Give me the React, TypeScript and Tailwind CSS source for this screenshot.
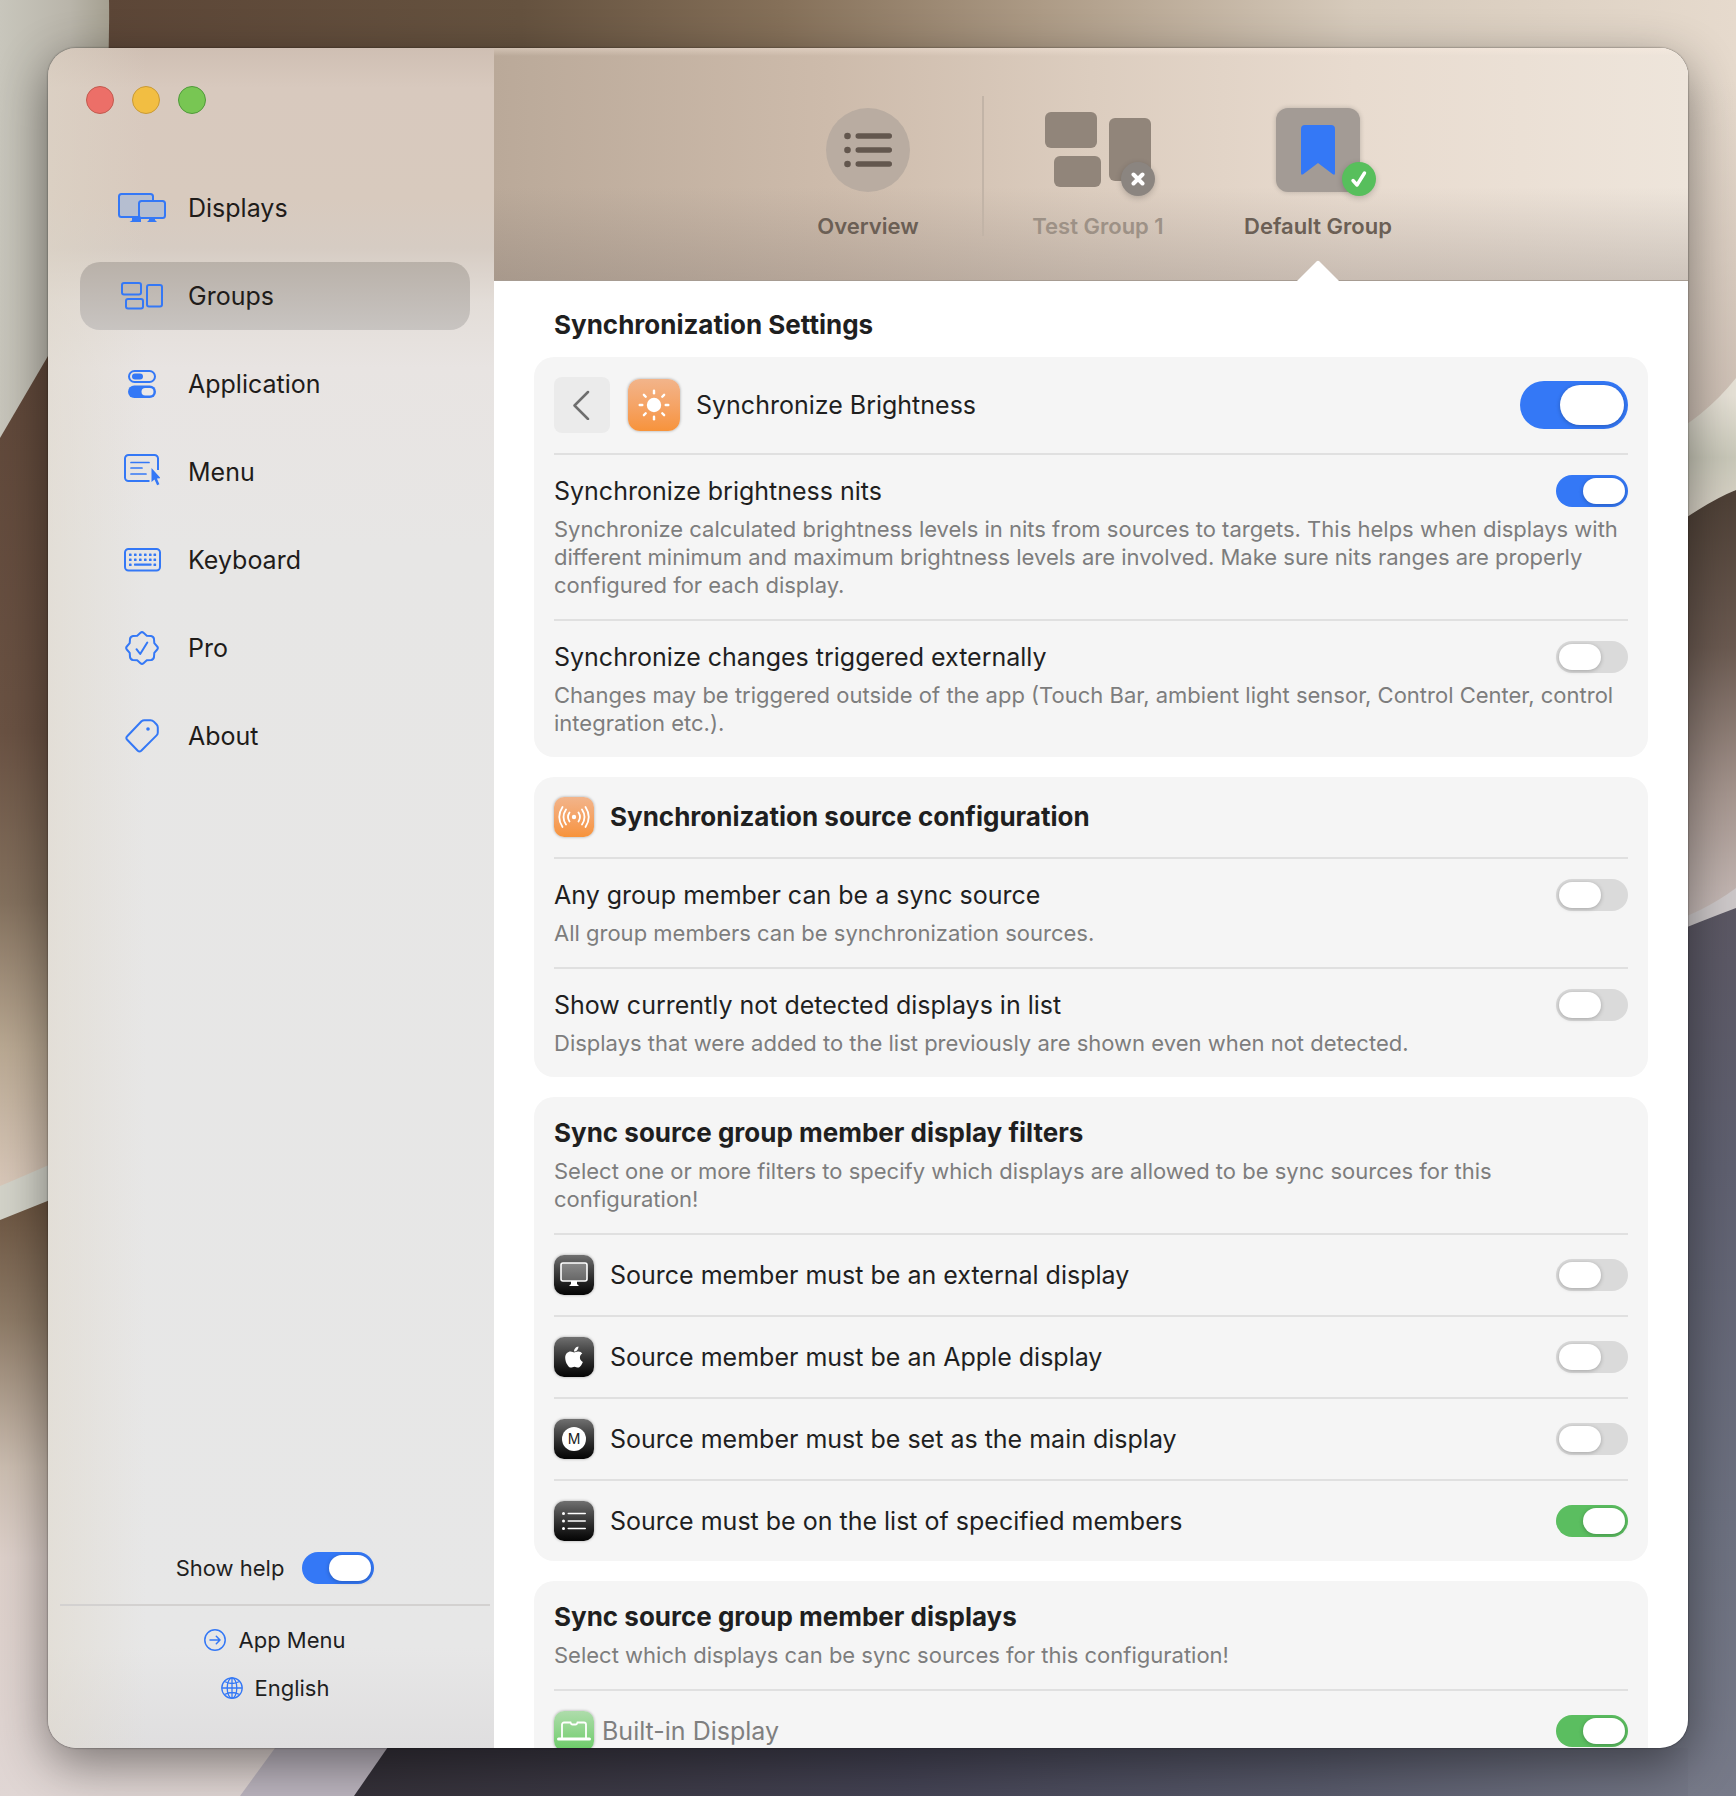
import type { ReactNode } from 'react';
import { clsx } from 'clsx';
import { FaApple } from 'react-icons/fa';

const BLUE = '#3478f6';

/* ---------- Icons ---------- */

function DisplaysIcon() {
  return (
    <svg width="48" height="30" viewBox="0 0 48 30" fill="none" aria-hidden="true">
      <path d="M14 24h9v5H11.500l2.500-1.500z" fill={BLUE} />
      <rect x="1" y="1" width="34" height="23" rx="2.500" fill="#b5bed0" stroke={BLUE} strokeWidth="2" />
      <rect x="21" y="8" width="26" height="17" rx="2.500" fill="#b5bed0" stroke={BLUE} strokeWidth="2" />
      <path d="M31 25h6v2l2 2H29l2-2z" fill={BLUE} />
    </svg>
  );
}

function GroupsIcon() {
  return (
    <svg width="42" height="28" viewBox="0 0 42 28" fill="none" stroke={BLUE} strokeWidth="2" aria-hidden="true">
      <rect x="1" y="1" width="19" height="11.500" rx="2" />
      <rect x="5" y="17" width="17" height="9.500" rx="2" />
      <rect x="26" y="3" width="15" height="21.500" rx="2" />
    </svg>
  );
}

function ApplicationIcon() {
  return (
    <svg width="28" height="28" viewBox="0 0 28 28" fill="none" aria-hidden="true">
      <rect x="1" y="1" width="26" height="11" rx="5.500" stroke={BLUE} strokeWidth="2" />
      <rect x="4" y="3.500" width="11" height="6" rx="3" fill={BLUE} />
      <rect x="0" y="15.500" width="28" height="12.500" rx="6.250" fill={BLUE} />
      <rect x="13.500" y="18" width="12" height="7.500" rx="3.750" fill="#ece9e8" />
    </svg>
  );
}

function MenuIcon() {
  return (
    <svg width="36" height="36" viewBox="0 0 36 36" fill="none" stroke={BLUE} strokeWidth="2" aria-hidden="true">
      <path d="M25.500 27H4.500A3.500 3.500 0 0 1 1 23.500v-19A3.500 3.500 0 0 1 4.500 1h26A3.500 3.500 0 0 1 34 4.500V16" />
      <path d="M7 8.500h18M7 14h11M7 20h15" strokeWidth="1.700" strokeLinecap="round" />
      <path d="M27.500 14v14l3-2.600 2.600 5.800 2.300-1-2.500-5.700 3.600-.4z" fill={BLUE} stroke="none" />
    </svg>
  );
}

function KeyboardIcon() {
  const columns = [5, 10, 15, 20, 25, 29.5];
  return (
    <svg width="37" height="24" viewBox="0 0 37 24" fill="none" aria-hidden="true">
      <rect x="1" y="1" width="35" height="21.500" rx="3.500" stroke={BLUE} strokeWidth="2" />
      {columns.map((x) => (
        <g key={x} fill={BLUE}>
          <rect x={x} y="5.500" width="2.600" height="2.600" rx=".6" />
          <rect x={x} y="10.500" width="2.600" height="2.600" rx=".6" />
        </g>
      ))}
      <rect x="5" y="15.500" width="2.600" height="2.600" rx=".6" fill={BLUE} />
      <rect x="29.500" y="15.500" width="2.600" height="2.600" rx=".6" fill={BLUE} />
      <rect x="10" y="15.500" width="17.600" height="2.200" rx=".6" fill={BLUE} />
    </svg>
  );
}

function ProIcon() {
  return (
    <svg width="34" height="34" viewBox="-17 -17 34 34" fill="none" stroke={BLUE} strokeWidth="2" strokeLinecap="round" strokeLinejoin="round" aria-hidden="true">
      <path d="M-1.500-15.200Q0-16.500 1.500-15.200L4.800-12.300L9-12Q11.600-11.600 12-9L12.300-4.800L15.200-1.500Q16.500 0 15.200 1.500L12.300 4.800L12 9Q11.600 11.600 9 12L4.800 12.300L1.500 15.200Q0 16.500-1.500 15.200L-4.800 12.300L-9 12Q-11.600 11.600-12 9L-12.300 4.800L-15.200 1.500Q-16.500 0-15.200-1.500L-12.300-4.800L-12-9Q-11.600-11.600-9-12L-4.800-12.300Z" />
      <path d="M-5.500 1.200L-1.800 6L5.300-5.500" />
    </svg>
  );
}

function AboutIcon() {
  return (
    <svg width="34" height="34" viewBox="0 0 34 34" fill="none" stroke={BLUE} strokeWidth="2" strokeLinejoin="round" aria-hidden="true">
      <path d="M16.500 2.200Q17.800 1.200 19.300 1.200H25.500Q27.500 1.200 28.800 2.600L31.600 5.500Q32.800 6.800 32.800 8.600V13.500Q32.800 15.200 31.600 16.400L16.200 31.800Q14.500 33.300 12.800 31.800L2.200 20.800Q.5 18.900 2.200 17.200Z" />
      <circle cx="23" cy="10" r="1.800" fill={BLUE} stroke="none" />
    </svg>
  );
}

function ArrowCircleIcon() {
  return (
    <svg width="22" height="22" viewBox="0 0 22 22" fill="none" stroke={BLUE} strokeWidth="1.500" strokeLinecap="round" strokeLinejoin="round" aria-hidden="true">
      <circle cx="11" cy="11" r="10.200" />
      <path d="M6 11h10M12.300 7.300L16 11l-3.700 3.700" />
    </svg>
  );
}

function GlobeIcon() {
  return (
    <svg width="22" height="22" viewBox="0 0 22 22" fill="none" stroke={BLUE} strokeWidth="1.300" aria-hidden="true">
      <circle cx="11" cy="11" r="10.200" />
      <ellipse cx="11" cy="11" rx="4.800" ry="10.200" />
      <path d="M11 .8v20.400M.8 11h20.400M3.500 4.500Q11 8.500 18.500 4.500M3.500 17.500Q11 13.500 18.500 17.500" />
    </svg>
  );
}

function SunIcon() {
  return (
    <svg width="32" height="32" viewBox="-16 -16 32 32" fill="#fff" aria-hidden="true">
      <circle r="7.200" />
      {[0, 45, 90, 135, 180, 225, 270, 315].map((angle) => (
        <rect key={angle} x="-1.200" y="-15.500" width="2.400" height="5" rx="1.200" transform={`rotate(${angle})`} />
      ))}
    </svg>
  );
}

function BroadcastIcon() {
  return (
    <svg width="32" height="24" viewBox="-16 -12 32 24" fill="none" stroke="#fff" strokeWidth="1.800" strokeLinecap="round" aria-hidden="true">
      <circle r="2.200" fill="#fff" stroke="none" />
      <path d="M4.500-4.500Q7.500 0 4.500 4.500M-4.500-4.500Q-7.500 0-4.500 4.500M8-7.500Q13 0 8 7.500M-8-7.500Q-13 0-8 7.500M11.500-10Q18 0 11.500 10M-11.500-10Q-18 0-11.500 10" />
    </svg>
  );
}

function MonitorIcon() {
  return (
    <svg width="28" height="26" viewBox="0 0 28 26" fill="none" aria-hidden="true">
      <rect x="1" y="1" width="26" height="18" rx="2" fill="#fff" fillOpacity=".3" stroke="#fff" strokeWidth="1.600" />
      <path d="M11 19h6v3l2 2H9l2-2z" fill="#fff" />
    </svg>
  );
}

function MainIcon() {
  return (
    <span className="flex size-6 items-center justify-center rounded-full bg-white text-sm leading-none text-[#222]">
      M
    </span>
  );
}

function OverviewIcon() {
  return (
    <svg width="48" height="36" viewBox="0 0 48 36" fill="#63574e" aria-hidden="true">
      {[4, 18, 32].map((y) => (
        <g key={y}>
          <circle cx="3.500" cy={y} r="3.300" />
          <rect x="11.500" y={y - 2.7} width="36.500" height="5.400" rx="2.700" />
        </g>
      ))}
    </svg>
  );
}

function ListIcon() {
  return (
    <svg width="24" height="18" viewBox="0 0 24 18" fill="#fff" aria-hidden="true">
      {[1.5, 9, 16.5].map((y) => (
        <g key={y}>
          <circle cx="1.500" cy={y} r="1.500" />
          <rect x="5.500" y={y - 0.8} width="18.500" height="1.600" rx=".8" />
        </g>
      ))}
    </svg>
  );
}

function LaptopIcon() {
  return (
    <svg width="34" height="20" viewBox="0 0 34 20" fill="none" aria-hidden="true">
      <path d="M5 17V3.500A2 2 0 0 1 7 1.500h6.500Q14 3.500 15.500 3.500h3Q20 3.500 20.500 1.500H27a2 2 0 0 1 2 2V17" stroke="#fff" strokeWidth="1.800" />
      <rect x="0" y="16.500" width="34" height="3" rx="1.500" fill="#fff" />
    </svg>
  );
}

function TestGroupArt() {
  return (
    <svg width="106" height="84" viewBox="0 0 106 84" fill="#91857a" aria-hidden="true">
      <rect x="0" y="4" width="52" height="36" rx="6" />
      <rect x="9" y="48" width="47" height="31" rx="6" />
      <rect x="64" y="10" width="42" height="63" rx="6" />
    </svg>
  );
}

/* ---------- Wallpaper ---------- */

function Wallpaper() {
  return (
    <svg className="absolute inset-0 h-full w-full" viewBox="0 0 1736 1796" preserveAspectRatio="none" aria-hidden="true">
      <defs>
        <linearGradient id="top">
          <stop offset=".06" stopColor="#5c4637" />
          <stop offset=".3" stopColor="#65523f" />
          <stop offset=".45" stopColor="#857059" />
          <stop offset=".6" stopColor="#ad9b86" />
          <stop offset=".78" stopColor="#d6cabb" />
          <stop offset="1" stopColor="#e6dacd" />
        </linearGradient>
        <linearGradient id="shade" gradientUnits="userSpaceOnUse" x1="0" y1="80" x2="0" y2="440">
          <stop offset="0" stopColor="#cbbdb2" stopOpacity="0" />
          <stop offset="1" stopColor="#cbbdb2" />
        </linearGradient>
        <linearGradient id="petal" gradientUnits="userSpaceOnUse" x1="0" y1="0" x2="116" y2="0">
          <stop offset="0" stopColor="#c8c6bc" />
          <stop offset=".6" stopColor="#b9b5aa" />
          <stop offset="1" stopColor="#a19c8c" />
        </linearGradient>
        <linearGradient id="left" gradientUnits="userSpaceOnUse" x1="0" y1="350" x2="0" y2="1200">
          <stop offset="0" stopColor="#5f4739" />
          <stop offset=".45" stopColor="#6a5243" />
          <stop offset=".65" stopColor="#84715e" />
          <stop offset=".82" stopColor="#b9a892" />
          <stop offset="1" stopColor="#dccbbd" />
        </linearGradient>
        <linearGradient id="lower" gradientUnits="userSpaceOnUse" x1="0" y1="1200" x2="0" y2="1796">
          <stop offset="0" stopColor="#6b5440" />
          <stop offset=".2" stopColor="#8d7a66" />
          <stop offset=".45" stopColor="#cbbdb0" />
          <stop offset=".6" stopColor="#ddd0ca" />
          <stop offset="1" stopColor="#e0d6d4" />
        </linearGradient>
        <linearGradient id="night" gradientUnits="userSpaceOnUse" x1="350" y1="0" x2="1736" y2="0">
          <stop offset="0" stopColor="#343038" />
          <stop offset=".4" stopColor="#444354" />
          <stop offset=".7" stopColor="#585a6b" />
          <stop offset="1" stopColor="#777a89" />
        </linearGradient>
        <linearGradient id="dusk" gradientUnits="userSpaceOnUse" x1="0" y1="900" x2="0" y2="1796">
          <stop offset="0" stopColor="#5b5763" />
          <stop offset=".3" stopColor="#5f6070" />
          <stop offset=".7" stopColor="#6d7180" />
          <stop offset="1" stopColor="#777a89" />
        </linearGradient>
        <linearGradient id="fold" gradientUnits="userSpaceOnUse" x1="0" y1="500" x2="0" y2="920">
          <stop offset="0" stopColor="#4f4137" />
          <stop offset=".35" stopColor="#6b5a51" />
          <stop offset=".7" stopColor="#a5958e" />
          <stop offset="1" stopColor="#c9bdba" />
        </linearGradient>
        <linearGradient id="band" gradientUnits="userSpaceOnUse" x1="0" y1="395" x2="0" y2="520">
          <stop offset="0" stopColor="#e6e1d6" />
          <stop offset=".5" stopColor="#c9c8b9" />
          <stop offset="1" stopColor="#ddd6ca" />
        </linearGradient>
      </defs>
      <rect width="1736" height="1000" fill="url(#top)" />
      <path d="M1600 80H1736V520H1600z" fill="url(#shade)" />
      <path d="M0 300H400V1250H0z" fill="url(#left)" />
      <path d="M0 0H109Q112 200 48 356L0 438z" fill="url(#petal)" />
      <path d="M0 1200H500V1796H0z" fill="url(#lower)" />
      <path d="M0 1186Q24 1176 60 1160V1196L0 1220z" fill="#d3d3c9" />
      <path d="M1500 520L1736 490V940H1500z" fill="url(#fold)" />
      <path d="M1660 440Q1704 418 1736 378V490Q1706 502 1660 536z" fill="url(#band)" />
      <path d="M275 1748L240 1796H360L400 1740z" fill="#bcb5bf" />
      <path d="M390 1744L354 1796H1736V1744z" fill="url(#night)" />
      <path d="M1600 950L1736 902V1796H1688V1748H1600z" fill="url(#dusk)" />
      <path d="M1660 926Q1704 912 1736 888V908Q1704 920 1660 938z" fill="#cdc8c9" />
    </svg>
  );
}

/* ---------- Controls ---------- */

type SwitchTone = 'blue' | 'green';

interface SwitchProps {
  id: string;
  checked?: boolean;
  tone?: SwitchTone;
  large?: boolean;
}

function Switch({ id, checked, tone = 'blue', large }: SwitchProps) {
  return (
    <input
      id={id}
      type="checkbox"
      role="switch"
      defaultChecked={checked}
      className={clsx(
        'shrink-0 appearance-none rounded-full bg-[#dadada] before:block before:rounded-full before:bg-white before:shadow-[0_1px_4px_rgba(0,0,0,0.25)]',
        tone === 'blue' ? 'checked:bg-[#3478f6]' : 'checked:bg-[#5bbe60]',
        large
          ? 'h-12 w-[108px] before:m-1 before:h-10 before:w-16 checked:before:ml-10'
          : 'h-8 w-[72px] before:m-[3px] before:h-[26px] before:w-[42px] checked:before:ml-[27px]',
      )}
    />
  );
}

type TileTone = 'orange' | 'dark' | 'green';

const tileTones: Record<TileTone, string> = {
  orange: 'from-[#f2b48a] to-[#f7933a]',
  dark: 'from-[#707070] to-[#050505]',
  green: 'from-[#aedcab] to-[#69cc66]',
};

function Tile({ tone, large, children }: { tone: TileTone; large?: boolean; children: ReactNode }) {
  return (
    <span
      className={clsx(
        'flex shrink-0 items-center justify-center bg-linear-to-b text-white shadow-[0_0_3px_rgba(0,0,0,0.35)]',
        large ? 'size-[52px] rounded-xl' : 'size-10 rounded-[10px]',
        tileTones[tone],
      )}
    >
      {children}
    </span>
  );
}

function Card({ children }: { children: ReactNode }) {
  return <section className="divide-y-2 divide-[#e0e0e0] rounded-[20px] bg-[#f5f5f5] px-5">{children}</section>;
}

interface RowProps {
  id: string;
  label: string;
  description?: string;
  icon?: ReactNode;
  checked?: boolean;
  tone?: SwitchTone;
  muted?: boolean;
}

function SettingRow({ id, label, description, icon, checked, tone, muted }: RowProps) {
  return (
    <div className="py-5">
      <div className={clsx('flex items-center', icon ? 'min-h-10' : 'min-h-8', muted ? 'gap-2' : 'gap-4')}>
        {icon}
        <label htmlFor={id} className={clsx('flex-1 text-[25px] leading-8', muted && 'text-[#7f7f7f]')}>
          {label}
        </label>
        <Switch id={id} checked={checked} tone={tone} />
      </div>
      {description && <Description>{description}</Description>}
    </div>
  );
}

function Description({ children }: { children: ReactNode }) {
  return <p className="mt-2 text-[22px] leading-7 text-[#7d7d7d]">{children}</p>;
}

function Heading({ children }: { children: ReactNode }) {
  return <h2 className="text-[26px] leading-8 font-bold">{children}</h2>;
}

/* ---------- Data ---------- */

const navigation = [
  { name: 'Displays', icon: DisplaysIcon },
  { name: 'Groups', icon: GroupsIcon, active: true },
  { name: 'Application', icon: ApplicationIcon },
  { name: 'Menu', icon: MenuIcon },
  { name: 'Keyboard', icon: KeyboardIcon },
  { name: 'Pro', icon: ProIcon },
  { name: 'About', icon: AboutIcon },
];

const filters: RowProps[] = [
  { id: 'external', label: 'Source member must be an external display', icon: <Tile tone="dark"><MonitorIcon /></Tile> },
  { id: 'apple', label: 'Source member must be an Apple display', icon: <Tile tone="dark"><FaApple className="size-6" /></Tile> },
  { id: 'main', label: 'Source member must be set as the main display', icon: <Tile tone="dark"><MainIcon /></Tile> },
  { id: 'listed', label: 'Source must be on the list of specified members', icon: <Tile tone="dark"><ListIcon /></Tile>, checked: true, tone: 'green' },
];

/* ---------- Layout ---------- */

function Sidebar() {
  return (
    <aside className="flex w-[446px] shrink-0 flex-col bg-[linear-gradient(90deg,rgba(222,214,200,0.5),transparent_22%),linear-gradient(180deg,#cfbfb3,#d8c9be_40px,#d8cabe_150px,#d6ccc3_200px,#e3ddd8_255px,#e8e4e2_320px,#e7e6e5_500px,#e7e7e7_1600px,#dfdedf)]">
      <div className="flex gap-[18px] pt-[38px] pl-[38px]">
        <button aria-label="Close" className="size-7 rounded-full border border-[#c25a4e] bg-[#ec6f68]" />
        <button aria-label="Minimize" className="size-7 rounded-full border border-[#c99a35] bg-[#f2be42]" />
        <button aria-label="Zoom" className="size-7 rounded-full border border-[#4f9a3a] bg-[#78c653]" />
      </div>

      <nav className="mt-15 flex flex-1 flex-col gap-5 pr-6 pl-8">
        {navigation.map((item) => (
          <a
            key={item.name}
            href="#"
            className={clsx(
              'flex h-[68px] items-center gap-4 rounded-[20px] pl-8 text-[25px] leading-8 text-[#1f1c1a]',
              item.active && 'bg-linear-to-b from-[#b9b1a9] to-[#c8c4c1]',
            )}
          >
            <span className="flex w-15 justify-center">
              <item.icon />
            </span>
            {item.name}
          </a>
        ))}
      </nav>

      <div className="pr-1 pb-[46px] pl-3 text-[22px] leading-7 text-[#1f1f1f]">
        <div className="flex items-center justify-center gap-[18px] border-b-2 border-[#d3d1d0] pb-5">
          <label htmlFor="help">Show help</label>
          <Switch id="help" checked />
        </div>
        <div className="flex flex-col items-center gap-5 pt-5">
          <button className="flex items-center gap-3">
            <ArrowCircleIcon />
            App Menu
          </button>
          <button className="flex items-center gap-3">
            <GlobeIcon />
            English
          </button>
        </div>
      </div>
    </aside>
  );
}

function Header() {
  const tab = 'relative flex w-[220px] flex-col items-center gap-5 pt-15 pb-10 text-[22px] leading-7 font-semibold';
  const badge = 'absolute flex size-[34px] items-center justify-center rounded-full shadow-[0_2px_6px_rgba(0,0,0,0.2)]';

  return (
    <header className="flex justify-center border-b border-[#a79c92] bg-[linear-gradient(180deg,rgba(255,240,228,0.35),transparent_8px,transparent_60%,rgba(120,110,105,0.28)),linear-gradient(90deg,#baa999,#cdbbab_28%,#dccdbf_50%,#e8dbcf_72%,#eee5db)] pl-1">
      <button className={clsx(tab, 'text-[#6b5f55]')}>
        <span className="flex size-21 items-center justify-center rounded-full bg-[#b9aca1]">
          <OverviewIcon />
        </span>
        Overview
      </button>
      <div className="mx-1 mt-12 h-[140px] w-0.5 bg-[#c2b4a7]" />
      <button className={clsx(tab, 'text-[#9d9186]')}>
        <span className="relative">
          <TestGroupArt />
          <span className={clsx(badge, '-right-1 -bottom-1 bg-[#8b8580]')}>
            <svg width="14" height="14" viewBox="0 0 14 14" stroke="#fff" strokeWidth="4" strokeLinecap="round" aria-hidden="true">
              <path d="M2.500 2.500l9 9M11.500 2.500l-9 9" />
            </svg>
          </span>
        </span>
        Test Group 1
      </button>
      <button className={clsx(tab, 'text-[#6b5f55]')}>
        <span className="relative flex size-21 items-center justify-center rounded-xl bg-[#a39b95] shadow-[0_0_5px_rgba(0,0,0,0.2)]">
          <svg width="34" height="50" viewBox="0 0 34 50" aria-hidden="true">
            <path d="M4 0h26a4 4 0 0 1 4 4v44q0 3-2.500 1L17 38 2.500 49Q0 51 0 48V4a4 4 0 0 1 4-4z" fill={BLUE} />
          </svg>
          <span className={clsx(badge, '-right-4 -bottom-1 bg-[#57bf5c]')}>
            <svg width="18" height="18" viewBox="0 0 18 18" fill="none" stroke="#fff" strokeWidth="3.400" strokeLinecap="round" strokeLinejoin="round" aria-hidden="true">
              <path d="M3 10.500l4 4.500L14.500 3" />
            </svg>
          </span>
        </span>
        Default Group
        <svg className="absolute -bottom-px" width="42" height="21" viewBox="0 0 42 21" fill="#fff" aria-hidden="true">
          <path d="M0 21L19.500 1.500q1.500-1.500 3 0L42 21z" />
        </svg>
      </button>
    </header>
  );
}

export default function App() {
  return (
    <div className="relative h-screen overflow-hidden p-12 font-[Inter,sans-serif]">
      <Wallpaper />
      <div className="relative flex h-full overflow-hidden rounded-[28px] shadow-[0_0_2px_rgba(0,0,0,0.6),0_16px_50px_rgba(0,0,0,0.45)]">
        <Sidebar />
        <div className="flex min-w-0 flex-1 flex-col bg-white">
          <Header />
          <main className="flex-1 overflow-hidden px-10 pt-7 text-[#1f1f1f]">
            <h1 className="mb-4 pl-5 text-[26px] leading-8 font-bold">Synchronization Settings</h1>

            <div className="flex flex-col gap-5">
              <Card>
                <div className="flex items-center py-5">
                  <button aria-label="Back" className="mr-[18px] flex size-14 items-center justify-center rounded-lg bg-[#ebebeb]">
                    <svg width="18" height="30" viewBox="0 0 18 30" fill="none" stroke="#6e6e6e" strokeWidth="2.500" strokeLinecap="round" strokeLinejoin="round" aria-hidden="true">
                      <path d="M15 2L1.500 15.500L15 29" />
                    </svg>
                  </button>
                  <Tile tone="orange" large>
                    <SunIcon />
                  </Tile>
                  <label htmlFor="brightness" className="ml-4 flex-1 text-[25px] leading-8">
                    Synchronize Brightness
                  </label>
                  <Switch id="brightness" checked large />
                </div>
                <SettingRow
                  id="nits"
                  label="Synchronize brightness nits"
                  description="Synchronize calculated brightness levels in nits from sources to targets. This helps when displays with different minimum and maximum brightness levels are involved. Make sure nits ranges are properly configured for each display."
                  checked
                />
                <SettingRow
                  id="external-changes"
                  label="Synchronize changes triggered externally"
                  description="Changes may be triggered outside of the app (Touch Bar, ambient light sensor, Control Center, control integration etc.)."
                />
              </Card>

              <Card>
                <div className="flex items-center gap-4 py-5">
                  <Tile tone="orange">
                    <BroadcastIcon />
                  </Tile>
                  <Heading>Synchronization source configuration</Heading>
                </div>
                <SettingRow
                  id="any-source"
                  label="Any group member can be a sync source"
                  description="All group members can be synchronization sources."
                />
                <SettingRow
                  id="not-detected"
                  label="Show currently not detected displays in list"
                  description="Displays that were added to the list previously are shown even when not detected."
                />
              </Card>

              <Card>
                <div className="py-5">
                  <Heading>Sync source group member display filters</Heading>
                  <Description>
                    Select one or more filters to specify which displays are allowed to be sync sources for this configuration!
                  </Description>
                </div>
                {filters.map((filter) => (
                  <SettingRow key={filter.id} {...filter} />
                ))}
              </Card>

              <Card>
                <div className="py-5">
                  <Heading>Sync source group member displays</Heading>
                  <Description>Select which displays can be sync sources for this configuration!</Description>
                </div>
                <SettingRow id="built-in" label="Built-in Display" icon={<Tile tone="green"><LaptopIcon /></Tile>} checked tone="green" muted />
              </Card>
            </div>
          </main>
        </div>
      </div>
    </div>
  );
}
